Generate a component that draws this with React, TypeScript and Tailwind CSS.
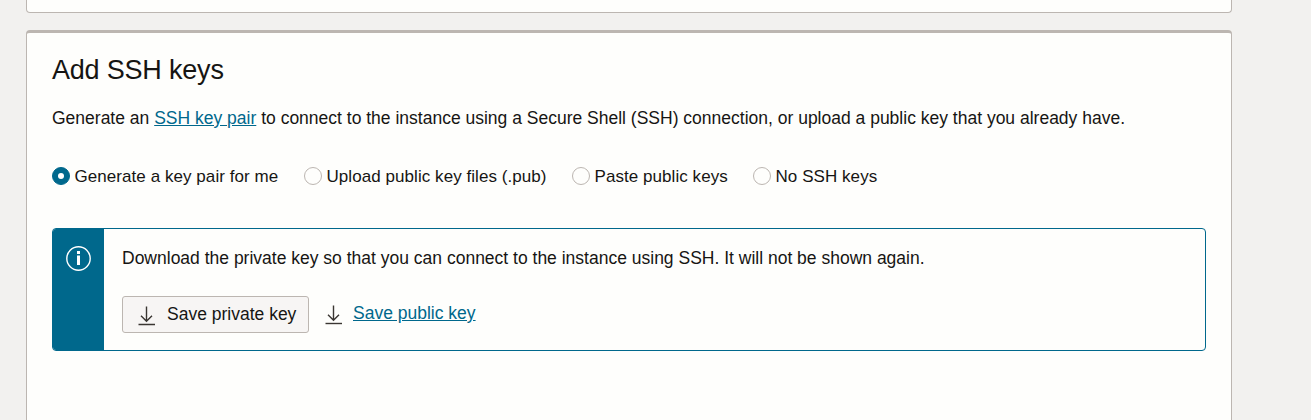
import { clsx } from 'clsx';

const options = [
  { label: 'Generate a key pair for me', width: 'w-[252px]' },
  { label: 'Upload public key files (.pub)', width: 'w-[268px]' },
  { label: 'Paste public keys', width: 'w-[181px]' },
  { label: 'No SSH keys', width: 'w-[130px]' },
];

const DownloadIcon = () => (
  <svg
    width="18"
    height="20"
    viewBox="0 0 18 20"
    fill="none"
    stroke="#3a3632"
    strokeWidth="1.4"
    className="shrink-0"
  >
    <path d="M8.5 0.5V15M3 9.8L8.5 15.2L14 9.8" />
    <path d="M0.5 18.5H17" />
  </svg>
);

const InfoIcon = () => (
  <svg width="25" height="25" viewBox="0 0 25 25" fill="none">
    <circle cx="12.5" cy="12.5" r="11.7" stroke="#fff" strokeWidth="1.4" />
    <path d="M11 5H14V8H11ZM11 9.5H14V19H11Z" fill="#fff" />
  </svg>
);

const Radio = ({ checked }: { checked: boolean }) => (
  <span
    className={clsx(
      'flex size-[18px] shrink-0 items-center justify-center rounded-full border',
      checked ? 'border-[#00688c] bg-[#00688c]' : 'border-[#bcb6b1] bg-[#fefefc]'
    )}
  >
    {checked && <span className="size-[6px] rounded-full bg-white" />}
  </span>
);

export default function App() {
  return (
    <div className="flex h-[420px] flex-col overflow-hidden bg-[#f2f1ef] pl-[26px] font-['Liberation_Sans',Arial,sans-serif] text-[#161513]">
      {/* End of the previous section */}
      <div className="h-[13px] w-[1206px] shrink-0 rounded-b-[4px] border border-t-0 border-[#bcb6b1] bg-[#fefefc]" />

      <section className="mt-[17px] h-[400px] w-[1206px] shrink-0 rounded-t-[4px] border border-t-[3px] border-[#bcb6b1] bg-[#fefefc] px-[25px] pt-5">
        <h2 className="text-[27px] leading-[34px] tracking-[-0.2px]">Add SSH keys</h2>
        <p className="mt-[19px] text-[17.5px] leading-6 whitespace-nowrap">
          Generate an{' '}
          <a href="#" className="text-[#00688c] underline">
            SSH key pair
          </a>{' '}
          to connect to the instance using a Secure Shell (SSH) connection, or upload a public key that you already have.
        </p>

        <div className="mt-[34px] flex h-6">
          {options.map((option, i) => (
            <label key={option.label} className={clsx('flex items-center gap-[4.5px] text-[17px] tracking-[0.06px] whitespace-nowrap', option.width)}>
              <Radio checked={i === 0} />
              <span className="pt-0.5">{option.label}</span>
            </label>
          ))}
        </div>

        <div className="mt-10 flex h-[123px] w-[1154px] overflow-hidden rounded-[4px] border border-[#00688c]">
          <div className="flex w-[51px] shrink-0 justify-center bg-[#00688c] pt-[17px]">
            <InfoIcon />
          </div>
          <div className="pl-[18px] pt-[17px] text-[17.5px]">
            <p className="leading-6 whitespace-nowrap">
              Download the private key so that you can connect to the instance using SSH. It will not be shown again.
            </p>
            <div className="mt-[26px] flex">
              <button className="flex h-[37px] w-[187px] items-center gap-[11px] rounded-[3px] border border-[#bcb6b1] bg-[#f7f5f4] pl-[15px] whitespace-nowrap">
                <span className="pt-[3px]">
                  <DownloadIcon />
                </span>
                Save private key
              </button>
              <a href="#" className="ml-4 flex h-[34px] items-center gap-[10px] text-[#00688c] underline">
                <span className="pt-1">
                  <DownloadIcon />
                </span>
                Save public key
              </a>
            </div>
          </div>
        </div>
      </section>
    </div>
  );
}
